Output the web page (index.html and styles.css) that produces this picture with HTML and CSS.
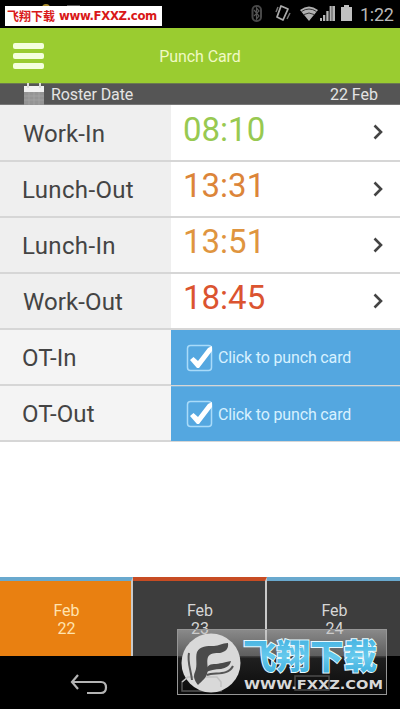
FILE: index.html
```html
<!DOCTYPE html>
<html lang="en">
<head>
<meta charset="utf-8">
<title>Punch Card</title>
<link rel="stylesheet" href="styles.css">
</head>
<body>
<div class="screen">
  <div class="status">
    <svg class="status-icons" width="116" height="28" viewBox="0 0 116 28">
      <rect x="12.500" y="6" width="8.500" height="15" rx="4" fill="none" stroke="#484848" stroke-width="2"/>
      <path d="M14 10l5 6-2.500 3V8l2.500 3-5 5" fill="none" stroke="#555" stroke-width="1.200"/>
      <path d="M41 6l7 3-5 11-6-3z" fill="none" stroke="#aaa" stroke-width="1.800" stroke-linejoin="round"/>
      <path d="M38 7l-2 5M50 13l-3 6" stroke="#777" stroke-width="1.500"/>
      <path d="M60 10q9-7 18 0l-9 11z" fill="#b0b0b0"/>
      <path d="M61.500 11.500q7.500-5 15 0M64 14.500q5-3 10 0" fill="none" stroke="#333" stroke-width="1"/>
      <path d="M80 21v-3h2v3zM83 21v-6h2.300v6zM86.300 21v-10h2.300v10zM89.600 21V6H95v15z" fill="#b5b5b5"/>
      <path d="M92 6v15" stroke="#555"/>
      <path d="M101 7h3V5h5v2h3v14h-11z" fill="#c0c0c0"/>
    </svg>
    <span class="clock">1:22</span>
    <svg class="notices" width="90" height="8" viewBox="0 0 90 8">
      <circle cx="46" cy="8" r="4" fill="#a98b2c"/>
      <path d="M67 5h13v3H67z" fill="#555"/>
    </svg>
    <div class="site-tag"><span class="site-cn">飞翔下载</span><span class="site-url">www.FXXZ.com</span></div>
  </div>
  <header class="header">
    <div class="menu"><i></i><i></i><i></i></div>
    <h1>Punch Card</h1>
  </header>
  <div class="roster">
    <svg width="20" height="22" viewBox="0 0 20 22">
      <path d="M0 3h20v6H0z" fill="#f1f1f1"/>
      <path d="M0 9h20v13H0z" fill="#949494"/>
      <path d="M4 0v5M16 0v5" stroke="#ddd" stroke-width="2"/>
      <path d="M0 13h20M0 17h20M5 9v13M10 9v13M15 9v13" stroke="#a8a8a8" stroke-width=".7"/>
    </svg>
    <span class="roster-name">Roster Date</span>
    <span class="roster-date">22 Feb</span>
  </div>
  <main class="rows">
    <div class="row"><div class="label work">Work-In</div><div class="time green">08:10</div><svg class="chev" width="10" height="16" viewBox="0 0 10 16"><path d="M1.500 1.500L8 8l-6.500 6.500"/></svg></div>
    <div class="row"><div class="label lunch">Lunch-Out</div><div class="time orange">13:31</div><svg class="chev" width="10" height="16" viewBox="0 0 10 16"><path d="M1.500 1.500L8 8l-6.500 6.500"/></svg></div>
    <div class="row"><div class="label lunch">Lunch-In</div><div class="time amber">13:51</div><svg class="chev" width="10" height="16" viewBox="0 0 10 16"><path d="M1.500 1.500L8 8l-6.500 6.500"/></svg></div>
    <div class="row"><div class="label work">Work-Out</div><div class="time red">18:45</div><svg class="chev" width="10" height="16" viewBox="0 0 10 16"><path d="M1.500 1.500L8 8l-6.500 6.500"/></svg></div>
    <div class="row pale"><div class="label">OT-In</div><div class="punch"><svg width="28" height="28" viewBox="0 0 28 28"><rect x="1.500" y="1.500" width="24" height="25" rx="3" class="box"/><path class="tick" d="M4 16l3.500-3 4.500 4L22 4l4-2v5L13 24h-2z"/></svg><span>Click to punch card</span></div></div>
    <div class="row pale"><div class="label">OT-Out</div><div class="punch"><svg width="28" height="28" viewBox="0 0 28 28"><rect x="1.500" y="1.500" width="24" height="25" rx="3" class="box"/><path class="tick" d="M4 16l3.500-3 4.500 4L22 4l4-2v5L13 24h-2z"/></svg><span>Click to punch card</span></div></div>
  </main>
  <div class="days">
    <div class="day active"><span>Feb</span><span>22</span></div>
    <div class="day late"><span>Feb</span><span>23</span></div>
    <div class="day"><span>Feb</span><span>24</span></div>
  </div>
  <div class="nav">
    <svg width="400" height="53" viewBox="0 0 400 53">
      <path d="M78 19l-6 7 6 7M73 26h28q5 0 5 5.500t-5 5.500H87" fill="none" stroke="#b4b4b4" stroke-width="2.200"/>
    </svg>
  </div>
  <div class="mark">
    <svg class="mark-logo" width="64" height="65" viewBox="0 0 64 65">
      <path d="M4 61V52l6-5h29l4 5v9z" fill="none" stroke="#555" stroke-width="1.500"/>
      <circle cx="33" cy="33" r="29.500" fill="#d9d9d9"/>
      <path d="M4 52l6-5h29l4 5v5" fill="none" stroke="#c2c2c2" stroke-width="1.500"/>
      <path d="M50 13c1 6-3 9-8 10-5 0-10 0-12 4-2 5 1 11-1 17-1 4-5 7-9 11-4-5-5-9-3-13 3-7 0-14 2-20 3-6 10-6 17-6 5 0 8-3 14-3z" fill="#4b4b4b"/>
      <path d="M53 31c-1 5-5 7-10 8-6 0-11 1-16 4 1-6 4-9 9-9 6 0 10-2 17-3z" fill="#4b4b4b"/>
      <path d="M11 23c-2 9 2 17 3 27M29 45c8-3 21 1 26-9" fill="none" stroke="#555" stroke-width="2"/>
    </svg>
    <svg width="143" height="63" viewBox="0 0 143 63">
      <defs><linearGradient id="sky" x1="0" y1="0" x2="0" y2="1"><stop offset="0" stop-color="#38a9dc"/><stop offset=".55" stop-color="#65c9ed"/><stop offset="1" stop-color="#35a7d8"/></linearGradient></defs>
      <path d="M53 60V46h34v14z" fill="none" stroke="#4c4c4c" stroke-width="1.500"/>
      <text class="mark-cn" x="1" y="38.500" textLength="134" lengthAdjust="spacingAndGlyphs">飞翔下载</text>
      <text class="mark-url" x="2" y="58.500" textLength="139" lengthAdjust="spacingAndGlyphs">WWW.FXXZ.COM</text>
    </svg>
  </div>
</div>
</body>
</html>
```
FILE: styles.css
```css
* { box-sizing: border-box; }
body { margin: 0; font-family: Roboto, "Noto Sans CJK SC", sans-serif; background: #fff; }
.screen { position: relative; width: 400px; height: 709px; display: flex; flex-direction: column; overflow: hidden; }
.status { position: relative; height: 28px; background: #000; display: flex; justify-content: flex-end; align-items: center; padding-right: 7px; flex: none; }
.status-icons { margin-right: 4px; }
.clock { width: 33px; color: #b8b8b8; font-size: 18px; line-height: 28px; white-space: nowrap; letter-spacing: -.3px; padding-top: 2px; }
.notices { position: absolute; left: 0; top: 0; }
.site-tag { position: absolute; left: 5px; top: 6px; width: 157px; height: 20px; background: #fff; color: #d91818; display: flex; align-items: center; padding-left: 2px; gap: 5px; white-space: nowrap; }
.site-cn { font: bold 12px/20px "Noto Sans CJK SC", sans-serif; width: 47px; }
.site-url { font: bold 13px/20px "DejaVu Sans", sans-serif; font-stretch: condensed; letter-spacing: -.35px; }
.header { height: 55px; background: #9acc30; display: flex; align-items: center; justify-content: center; position: relative; flex: none; }
.header h1 { margin: 2px 0 0; font-size: 16px; font-weight: 400; color: #f0f9c4; line-height: 20px; letter-spacing: -.1px; }
.menu { position: absolute; left: 13px; top: 15px; display: flex; flex-direction: column; gap: 4px; }
.menu i { width: 31px; height: 6px; background: #f4ffdc; border-radius: 2px; }
.roster { height: 22px; background: #555; display: flex; align-items: center; padding: 0 22px 0 24px; color: #e4e4e4; font-size: 16px; line-height: 22px; border-top: 1px solid #6b7951; border-bottom: 1px solid #777; flex: none; }
.roster-name { margin-left: 7px; flex: 1; padding-top: 2px; letter-spacing: -.1px; }
.roster-date { padding-top: 2px; }
.rows { flex: 1; }
.row { height: 56px; display: flex; border-bottom: 2px solid #d6d6d6; position: relative; }
.row:first-child { height: 57px; }
.label { width: 171px; background: #efefef; color: #444; font-size: 24px; line-height: 55px; padding: 1px 0 0 22px; letter-spacing: .1px; }
.pale .label { background: #f4f4f4; }
.label.work { padding-left: 23px; }
.row:first-child .label { padding-top: 2px; }
.label.lunch { letter-spacing: .35px; }
.time { flex: 1; font-size: 33px; line-height: 40px; padding: 4px 0 0 12px; }
.row:first-child .time { padding-top: 5px; }
.green { color: #98c951; }
.orange { color: #dc8539; }
.amber { color: #df953f; }
.red { color: #db5430; }
.chev { margin: 19px 17px 0 0; }
.chev path { fill: none; stroke: #444; stroke-width: 2.600; }
.punch { flex: 1; margin-bottom: -1px; background: #54a7e0; color: #d7f1ff; display: flex; align-items: center; padding-left: 15px; gap: 4px; }
.punch span { font-size: 16px; letter-spacing: -.15px; }
.row:last-child .punch { border-top: 1px solid #79b6df; }
.box { fill: none; stroke: #a9dbf9; stroke-width: 1.500; }
.tick { fill: #fff; }
.days { height: 79px; display: grid; grid-template-columns: 133px 134px 133px; flex: none; }
.day { background: #3d3d3d; border-top: 4px solid #69a9ce; border-right: 2px solid #c9c9c9; display: flex; flex-direction: column; align-items: center; color: #d6d6d6; font-size: 16px; line-height: 18px; padding: 21px 0 0 2px; }
.day.active { background: #e98011; color: #ffe3af; }
.day.late { border-top-color: #c74c23; }
.day:last-child { border-right: 0; }
.nav { height: 53px; background: #000; flex: none; }
.mark { position: absolute; left: 177px; top: 629px; width: 210px; height: 66px; border: 1px solid #969696; display: flex; background: linear-gradient(to bottom, rgba(200,200,200,.55), rgba(130,130,130,.45) 27px, rgba(90,90,90,.35) 28px, rgba(20,20,20,.5) 65px); }
.mark-logo { flex: none; }
.mark-cn { font: 900 34px "Noto Sans CJK SC", sans-serif; fill: url(#sky); stroke: #e9faff; stroke-width: 2; paint-order: stroke; }
.mark-url { font: bold 13px "DejaVu Sans", sans-serif; fill: #d8d8d8; }
```
